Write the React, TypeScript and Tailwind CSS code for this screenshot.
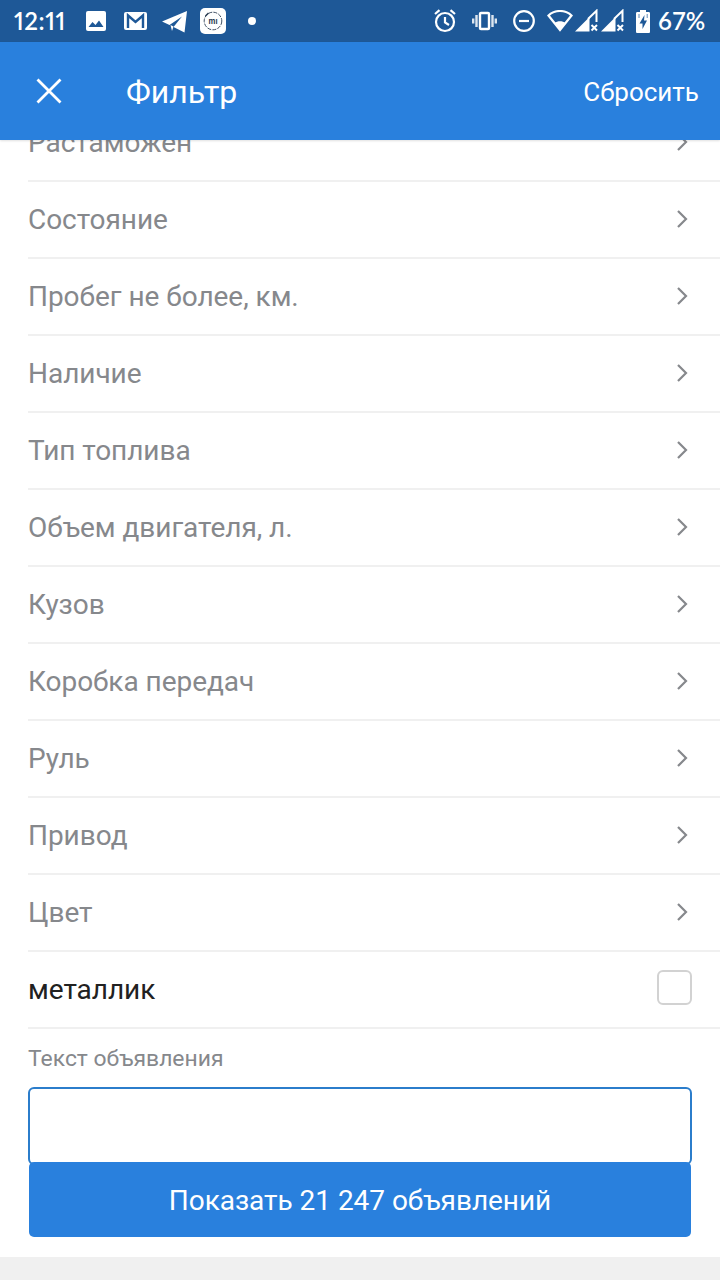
import { useState } from "react";

const filters = [
  "Растаможен",
  "Состояние",
  "Пробег не более, км.",
  "Наличие",
  "Тип топлива",
  "Объем двигателя, л.",
  "Кузов",
  "Коробка передач",
  "Руль",
  "Привод",
  "Цвет",
];

function SignalIcon({ className }: { className: string }) {
  return (
    <svg className={className} width="24" height="24" viewBox="0 0 24 24" fill="none">
      <path d="M0 22.500 14.500 8v14.500z" fill="#fff" />
      <path d="M13 10 21.500 1.800V13" stroke="#fff" strokeWidth="2" />
      <path d="m16.500 16 5.500 5.500m0-5.500-5.500 5.500" stroke="#fff" strokeWidth="2" />
    </svg>
  );
}

function StatusBar() {
  return (
    <div className="flex h-[42px] shrink-0 items-center bg-[#1e5897] text-white">
      <span className="ml-[14px] w-[72px] font-['Lato',sans-serif] text-[24px] leading-[44px] font-semibold tracking-[0.6px] proportional-nums">
        12:11
      </span>
      <svg width="20" height="20" viewBox="0 0 20 20">
        <rect width="20" height="20" rx="2" fill="#fff" />
        <path d="m2.500 16 4-5 3 3 3.500-4.500 4.500 6.500z" fill="#1e5897" />
      </svg>
      <svg className="ml-[18px]" width="23" height="18" viewBox="0 0 23 18">
        <rect width="23" height="18" rx="2" fill="#fff" />
        <path d="M4 16V3.500L11.500 10 19 3.500V16" fill="none" stroke="#1e5897" strokeWidth="2.400" />
      </svg>
      <svg className="mt-[2px] ml-[15px]" width="25" height="22" viewBox="0 0 25 22">
        <path d="M0 10.500 25 0l-2.500 21.500L11.500 16 20 5.500 7.500 14z" fill="#fff" />
        <path d="m8.500 14 3 1.500-1.500 4.500z" fill="#fff" />
      </svg>
      <svg className="ml-[13px]" width="26" height="26" viewBox="0 0 26 26">
        <rect width="26" height="26" rx="5" fill="#fff" />
        <circle cx="13" cy="13" r="8.800" fill="none" stroke="#2b3d52" strokeWidth="0.900" strokeDasharray="4 1.200" />
        <path d="m5.500 8 3-3" stroke="#2b3d52" strokeWidth="1.500" />
        <text x="13" y="15.500" fill="#2b3d52" fontSize="7.500" fontWeight="700" fontFamily="Inter, sans-serif" textAnchor="middle">
          mı
        </text>
      </svg>
      <span className="ml-[22px] size-2 rounded-full bg-white" />

      <svg className="ml-[178px]" width="22" height="24" viewBox="0 0 22 24" fill="none" stroke="#fff" strokeWidth="2.200">
        <circle cx="11" cy="13" r="9" />
        <path d="M11 8v5.500l4 2.500M1 5l4.500-3.800M21 5l-4.500-3.800" />
      </svg>
      <svg className="ml-[16px]" width="25" height="20" viewBox="0 0 25 20" fill="none" stroke="#fff" strokeWidth="2.400">
        <rect x="8" y="2" width="9" height="16" rx="1" />
        <path d="M4.500 4v12M20.500 4v12M1.200 7.500v5M23.800 7.500v5" strokeOpacity="0.850" />
      </svg>
      <svg className="ml-[16px]" width="22" height="22" viewBox="0 0 22 22" fill="none" stroke="#fff" strokeWidth="2.200">
        <circle cx="11" cy="11" r="9.800" />
        <path d="M6 11h10" />
      </svg>
      <svg className="ml-[12px]" width="26" height="22" viewBox="0 0 26 22">
        <path d="M1.500 5.500C8-.5 18-.5 24.500 5.500L13 20z" fill="none" stroke="#fff" strokeWidth="2.200" />
        <path d="M7.500 13c3-2.300 8-2.300 11 0L13 20.500z" fill="#fff" />
      </svg>
      <SignalIcon className="ml-[2px]" />
      <SignalIcon className="ml-[2px]" />
      <svg className="ml-[11px]" width="14" height="23" viewBox="0 0 14 23">
        <path d="M4 0h6v2h2.500c1 0 1.500.500 1.500 1.500v18c0 1-.500 1.500-1.500 1.500h-11C.5 23 0 22.500 0 21.500v-18C0 2.500.5 2 1.500 2H4z" fill="#fff" />
        <path d="M8.500 5 3.500 13.500h3V19l4.500-8.500H8z" fill="#1e5897" />
        <path d="M3 4v4M11.200 4v4" stroke="#1e5897" strokeOpacity="0.700" />
      </svg>
      <span className="ml-[8px] font-['Lato',sans-serif] text-[24px] leading-[44px] font-semibold">67%</span>
    </div>
  );
}

function Header() {
  return (
    <header className="z-10 flex h-[98px] shrink-0 items-center bg-[#2980dd] pr-[21px] pl-[36px] text-white shadow-[0_1px_2px_rgba(0,0,0,0.12)]">
      <svg width="26" height="26" viewBox="0 0 26 26" stroke="#fff" strokeWidth="2.800">
        <path d="m1.500 1.500 23 23m0-23-23 23" />
      </svg>
      <h1 className="ml-[64px] pt-px text-[32px] leading-[98px]">Фильтр</h1>
      <button className="ml-auto pt-0.5 text-[26px]">Сбросить</button>
    </header>
  );
}

export default function App() {
  const [metallic, setMetallic] = useState(false);

  return (
    <div className="flex h-[1280px] w-[720px] flex-col overflow-hidden bg-white font-['Roboto',sans-serif]">
      <StatusBar />
      <Header />
      <main className="h-[1022px] shrink-0">
        <ul className="-mt-[35px] pl-7">
          {filters.map((name) => (
            <li
              key={name}
              className="flex h-[77px] items-center justify-between border-b-2 border-[#f0f0f0] pr-8 text-[28px] tracking-[-0.04px] text-[#86888c]"
            >
              {name}
              <svg className="mb-0.5" width="12" height="20" viewBox="0 0 12 20" fill="none" stroke="#86888c" strokeWidth="2.200">
                <path d="m2 2 8 8-8 8" />
              </svg>
            </li>
          ))}
          <li className="flex h-[77px] items-center justify-between border-b-2 border-[#f0f0f0] pr-7 text-[28px] tracking-[-0.04px] text-[#212121]">
            металлик
            <button
              role="checkbox"
              aria-checked={metallic}
              aria-label="металлик"
              className={`mb-1 size-[35px] rounded-[6px] border-2 border-[#d2d2d2] ${
                metallic ? "bg-[#2980dd]" : "bg-white"
              }`}
              onClick={() => setMetallic(!metallic)}
            />
          </li>
        </ul>
        <label className="block px-7">
          <span className="block h-[58px] pt-px text-[22.9px] leading-[58px] text-[#86888c]">
            Текст объявления
          </span>
          <input
            type="text"
            className="block h-[78px] w-full rounded-[6px] border-2 border-[#2b7dcb] px-4 text-[28px] outline-none"
          />
        </label>
      </main>
      <div className="z-10 h-[95px] shrink-0 px-[29px]">
        <button className="h-[75px] w-full rounded-[5px] bg-[#2980dd] pt-0.5 text-[28px] tracking-[-0.04px] text-white">
          Показать 21 247 объявлений
        </button>
      </div>
      <div className="grow bg-[#f0f0f0]" />
    </div>
  );
}
